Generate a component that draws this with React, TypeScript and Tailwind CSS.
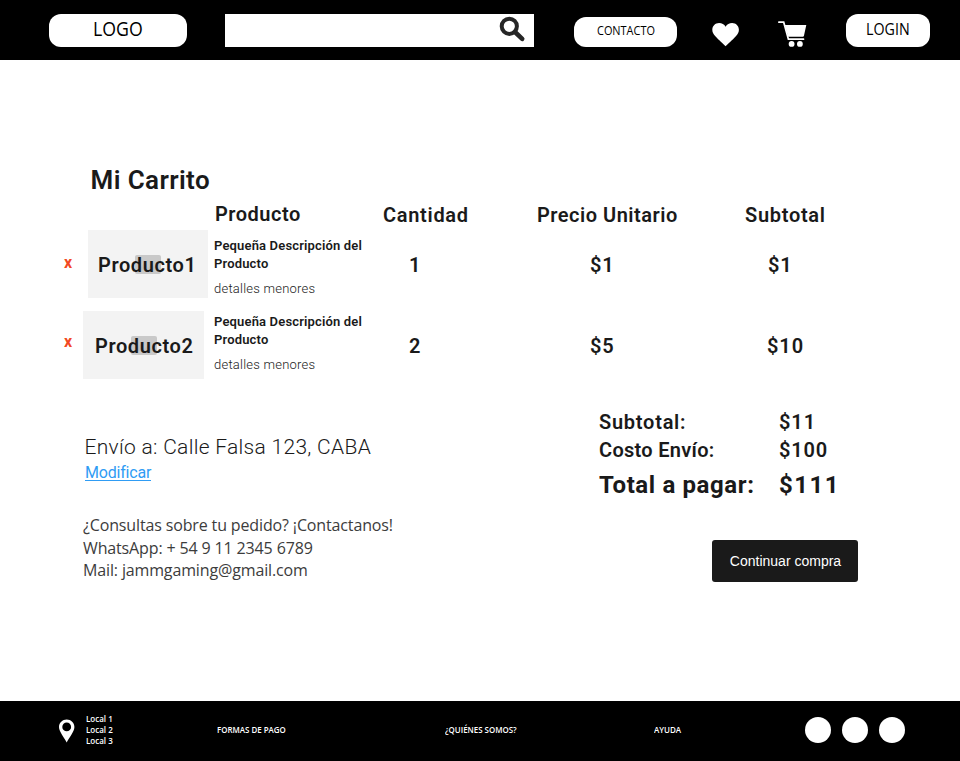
import React from "react";

type Item = {
  name: string;
  qty: string;
  unit: string;
  subtotal: string;
};

const items: Item[] = [
  { name: "Producto1", qty: "1", unit: "$1", subtotal: "$1" },
  { name: "Producto2", qty: "2", unit: "$5", subtotal: "$10" },
];

function Header() {
  return (
    <header className="flex h-[60px] w-full items-start bg-black font-['Open_Sans',sans-serif] text-black">
      <div className="ml-[49px] mt-[14px] h-[33px] w-[138px] rounded-[12px] bg-white pl-[43.5px] pt-[5px] text-[19.5px] leading-[20px]">
        <span className="inline-block origin-left scale-x-[0.91]">LOGO</span>
      </div>
      <div className="ml-[38px] mt-[14px] flex h-[33px] w-[309px] justify-end bg-white pr-[8px] pt-[2px]">
        <svg width="27" height="27" viewBox="0 0 27 27" fill="none" stroke="#262626">
          <circle cx="10.3" cy="10.3" r="7.6" strokeWidth="4" />
          <path d="M16 16 L23.2 22.9" strokeWidth="4.6" strokeLinecap="round" />
        </svg>
      </div>
      <div className="ml-[40px] mt-[17px] h-[30px] w-[103px] rounded-[12px] bg-white pl-[22.5px] pt-[4px] text-[12px] font-medium leading-[20px]">
        <span className="inline-block origin-left scale-x-[0.91]">CONTACTO</span>
      </div>
      <svg className="ml-[35px] mt-[22px]" width="28" height="25" viewBox="0 0 28 25" fill="#fff">
        <path d="M13.6 24.3 C12 22.6 6.5 17.8 3.6 14.6 C1.2 12 0.3 10 0.3 7.8 C0.3 3.9 3.3 1 7.1 1 C9.9 1 12.2 2.3 13.6 4.7 C15 2.3 17.3 1 20.1 1 C23.9 1 26.9 3.9 26.9 7.8 C26.9 10 26 12 23.6 14.6 C20.7 17.8 15.2 22.6 13.6 24.3Z" />
      </svg>
      <svg className="ml-[38px] mt-[20px]" width="29" height="28" viewBox="0 0 29 28">
        <path d="M0.8 2.2 H5.7 L10.4 19.2 H25.5" fill="none" stroke="#fff" strokeWidth="1.7" strokeLinecap="round" />
        <path d="M6.7 5 H28.3 L25.9 16 Q25.7 16.8 24.8 16.8 H10.2Z" fill="#fff" />
        <circle cx="13.6" cy="23.9" r="2.9" fill="#fff" />
        <circle cx="21.9" cy="23.9" r="2.9" fill="#fff" />
      </svg>
      <div className="ml-[39px] mt-[14px] h-[33px] w-[84px] rounded-[12px] bg-white pl-[20px] pt-[4.5px] text-[15.5px] leading-[20px]">
        <span className="inline-block origin-left scale-x-[0.92]">LOGIN</span>
      </div>
    </header>
  );
}

function CartRow({ item, first }: { item: Item; first: boolean }) {
  return (
    <div className={`grid h-[68px] grid-cols-[214px_169px_154px_208px_1fr] ${first ? "" : "mt-[13px]"}`}>
      <div className="flex">
        <button
          className={`ml-[64px] h-[16px] text-[16px] font-bold leading-[16px] text-[#f24822] ${
            first ? "mt-[25px] w-[24px]" : "mt-[23px] w-[19px]"
          } text-left`}
        >
          x
        </button>
        <div className={`relative h-[68px] shrink-0 bg-[#f3f3f3] ${first ? "w-[120px]" : "w-[121px]"}`}>
          <svg
            className={`absolute top-[25px] ${first ? "left-[47px]" : "left-[48px]"}`}
            width="26"
            height="19"
            viewBox="0 0 26 19"
          >
            <rect width="26" height="19" rx="2" fill="#c9c9c9" />
            <path d="M4 15 L9 8 L13 13 L17 9 L22 15Z" fill="#c3c3c3" />
          </svg>
          <span
            className={`absolute top-[25px] text-[20px] font-semibold leading-[20px] tracking-[0.6px] ${
              first ? "left-[10px]" : "left-[12px]"
            }`}
          >
            {item.name}
          </span>
        </div>
      </div>
      <div className={first ? "pt-[7px]" : "pt-[2px]"}>
        <p className="text-[13px] font-semibold leading-[17.5px] tracking-[0.16px]">
          Pequeña Descripción del
          <br />
          Producto
        </p>
        <p className="mt-[8px] text-[13px] font-light leading-[17.5px] tracking-[0.23px]">detalles menores</p>
      </div>
      <div className="pl-[26px] pt-[25px] text-[20px] font-semibold leading-[20px]">{item.qty}</div>
      <div className="pl-[53px] pt-[25px] text-[20px] font-semibold leading-[20px] tracking-[0.9px]">{item.unit}</div>
      <div
        className={`pt-[25px] text-[20px] font-semibold leading-[20px] tracking-[0.9px] ${
          first ? "pl-[23px]" : "pl-[22px]"
        }`}
      >
        {item.subtotal}
      </div>
    </div>
  );
}

function Cart() {
  return (
    <section>
      <h1 className="pl-[90.5px] pt-[107px] text-[26px] font-semibold leading-[26px] tracking-[0.4px]">Mi Carrito</h1>
      <div className="mt-[11px] grid h-[26px] grid-cols-[214px_169px_154px_208px_1fr] text-[20px] font-semibold leading-[20px]">
        <div />
        <div className="pl-[1px] tracking-[0.5px]">Producto</div>
        <div className="pt-[1px] tracking-[0.7px]">Cantidad</div>
        <div className="pt-[1px] tracking-[0.5px]">Precio Unitario</div>
        <div className="pt-[1px] tracking-[0.7px]">Subtotal</div>
      </div>
      {items.map((it, i) => (
        <CartRow key={it.name} item={it} first={i === 0} />
      ))}
    </section>
  );
}

function Summary() {
  return (
    <section className="flex">
      <div className="w-[599px] pt-[58px]">
        <p className="pl-[84.5px] text-[21px] font-light leading-[21px] tracking-[0.3px]">
          Envío a: Calle Falsa 123, CABA
        </p>
        <a className="ml-[85px] mt-[7px] block h-[16px] w-[66px] border-b border-[#2f9cf4] text-[16px] leading-[16px] tracking-[-0.2px] text-[#2f9cf4]">
          Modificar
        </a>
        <div className="mt-[33px] pl-[83px] font-['Open_Sans',sans-serif] text-[16px] leading-[22.6px] tracking-[-0.14px] text-[#3c3c3c]">
          <p>¿Consultas sobre tu pedido? ¡Contactanos!</p>
          <p>WhatsApp: + 54 9 11 2345 6789</p>
          <p>Mail: jammgaming@gmail.com</p>
        </div>
      </div>
      <div className="w-[259px] pt-[33px] text-[20px] font-semibold leading-[20px]">
        <div className="flex">
          <span className="w-[180px] tracking-[0.75px]">Subtotal:</span>
          <span className="tracking-[0.9px]">$11</span>
        </div>
        <div className="mt-[8px] flex">
          <span className="w-[180px] tracking-[0.3px]">Costo Envío:</span>
          <span className="tracking-[0.8px]">$100</span>
        </div>
        <div className="mt-[13px] flex text-[24px] font-bold leading-[24px]">
          <span className="w-[180px] whitespace-nowrap tracking-[0.62px]">Total a pagar:</span>
          <span className="tracking-[1.5px]">$111</span>
        </div>
        <button className="ml-[113px] mt-[43px] block h-[42px] w-[146px] rounded-[3px] bg-[#1a1a1a] pl-[1px] text-center font-['Liberation_Sans',Arial,sans-serif] text-[14px] font-normal leading-[41px] text-white">
          Continuar compra
        </button>
      </div>
    </section>
  );
}

function Footer() {
  return (
    <footer className="flex h-[60px] w-full items-start bg-black font-['Open_Sans',sans-serif] text-[9px] font-semibold text-white">
      <svg className="ml-[59px] mt-[18px]" width="16" height="24" viewBox="0 0 16 24">
        <path
          fill="#fff"
          fillRule="evenodd"
          d="M7.7 0.4 C3.5 0.4 0 3.7 0 8 C0 12.5 4.6 17.5 7.7 23.5 C10.8 17.5 15.4 12.5 15.4 8 C15.4 3.7 11.9 0.4 7.7 0.4Z M7.7 3.5 A4.4 4.4 0 1 1 7.7 12.3 A4.4 4.4 0 1 1 7.7 3.5Z"
        />
      </svg>
      <div className="ml-[10.5px] mt-[12px] w-[131.5px] origin-left scale-x-[0.89] leading-[11px]">
        <p>Local 1</p>
        <p>Local 2</p>
        <p>Local 3</p>
      </div>
      <p className="mt-[23px] w-[228px] origin-left scale-x-[0.88] leading-[11px]">FORMAS DE PAGO</p>
      <p className="mt-[23px] w-[209px] origin-left scale-x-[0.88] leading-[11px]">¿QUIÉNES SOMOS?</p>
      <p className="mt-[23px] w-[151px] origin-left scale-x-[0.89] leading-[11px]">AYUDA</p>
      <div className="mt-[16px] flex gap-[11px]">
        <span className="size-[26px] rounded-full bg-white" />
        <span className="size-[26px] rounded-full bg-white" />
        <span className="size-[26px] rounded-full bg-white" />
      </div>
    </footer>
  );
}

export default function App() {
  return (
    <div className="flex h-[761px] w-[960px] flex-col overflow-hidden bg-white font-['Roboto',sans-serif] text-[#1a1a1a]">
      <Header />
      <main className="flex-1">
        <Cart />
        <Summary />
      </main>
      <Footer />
    </div>
  );
}
